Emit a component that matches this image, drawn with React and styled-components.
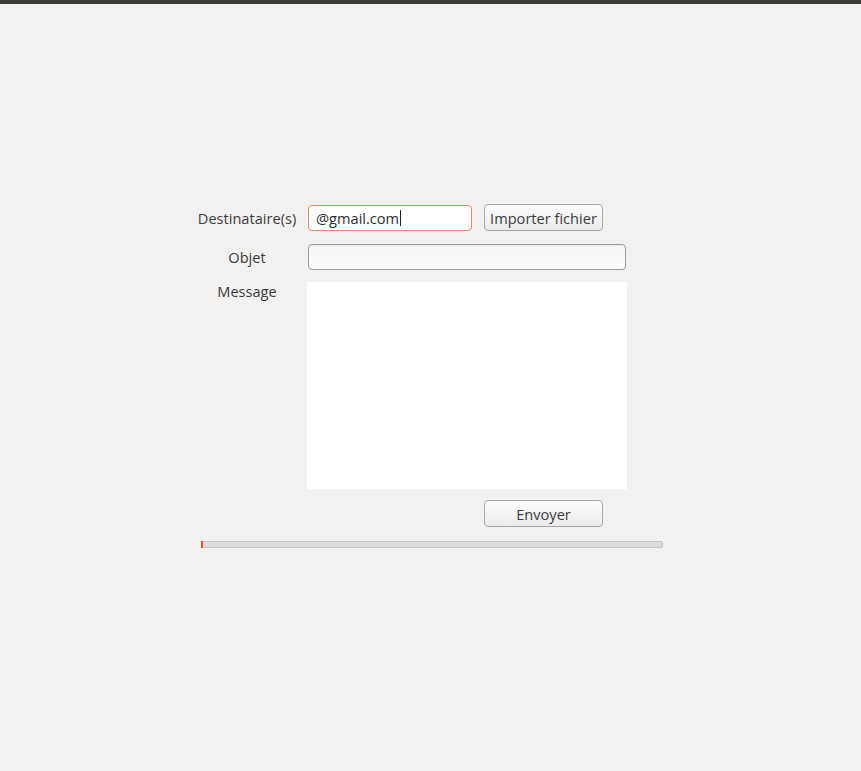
import React from 'react';
import styled, { createGlobalStyle } from 'styled-components';

const GlobalStyle = createGlobalStyle`
  html, body {
    margin: 0;
    padding: 0;
    background: #f2f1f0;
  }
  body {
    font-family: "Open Sans", "DejaVu Sans", sans-serif;
    color: #3c3c3c;
  }
`;

const Window = styled.div`
  width: 861px;
  height: 771px;
  background: #f2f1f0;
  border-top: 4px solid #3c3b37;
  box-sizing: border-box;
`;

const Form = styled.div`
  padding: 200px 0 0 197px;
  display: flex;
  flex-direction: column;
`;

const Row = styled.div`
  display: flex;
  align-items: ${p => (p.top ? 'flex-start' : 'center')};
  margin-bottom: ${p => p.mb || 0}px;
`;

const Label = styled.div`
  width: 100px;
  text-align: center;
  font-size: 14.6px;
  margin-right: ${p => p.gap || 11}px;
  line-height: 18px;
`;

const Input = styled.div`
  width: ${p => p.w}px;
  height: 26px;
  box-sizing: border-box;
  border: 1px solid ${p => (p.focused ? '#e8866b' : '#9a9a9a')};
  border-radius: 4px;
  background: ${p => (p.focused ? '#ffffff' : 'linear-gradient(#f7f7f7, #fdfdfd)')};
  box-shadow: ${p => (p.focused ? 'none' : 'inset 0 1px 1px rgba(0,0,0,0.06)')};
  display: flex;
  align-items: center;
  padding-left: 7px;
  font-size: 14.6px;
  color: #2d2d2d;
`;

const Caret = styled.span`
  display: inline-block;
  width: 1px;
  height: 16px;
  background: #222;
  margin-left: 1px;
`;

const Button = styled.button`
  width: 119px;
  height: 27px;
  box-sizing: border-box;
  border: 1px solid #a9a9a9;
  border-radius: 4px;
  background: linear-gradient(#fbfbfb, #ebebea);
  font-family: "Open Sans", "DejaVu Sans", sans-serif;
  font-size: 14.6px;
  color: #3c3c3c;
  padding: 0;
  margin-left: ${p => p.ml || 0}px;
`;

const MessageArea = styled.div`
  width: 320px;
  height: 207px;
  background: #ffffff;
`;

const Progress = styled.div`
  width: 462px;
  height: 7px;
  box-sizing: border-box;
  margin-left: 4px;
  border: 1px solid #c6c6c6;
  border-radius: 2px;
  background: #dcdcdc;
  display: flex;
`;

const Chunk = styled.div`
  width: 2px;
  height: 7px;
  margin: -1px 0 0 -1px;
  background: #e0562a;
`;

export default function App() {
  return (
    <>
      <GlobalStyle />
      <Window>
        <Form>
          <Row mb={13}>
            <Label>Destinataire(s)</Label>
            <Input w={164} focused>
              @gmail.com<Caret />
            </Input>
            <Button ml={12}>Importer fichier</Button>
          </Row>
          <Row mb={12}>
            <Label>Objet</Label>
            <Input w={318} />
          </Row>
          <Row top mb={11}>
            <Label gap={10}>Message</Label>
            <MessageArea />
          </Row>
          <Row mb={14}>
            <Button ml={287}>Envoyer</Button>
          </Row>
          <Progress>
            <Chunk />
          </Progress>
        </Form>
      </Window>
    </>
  );
}
